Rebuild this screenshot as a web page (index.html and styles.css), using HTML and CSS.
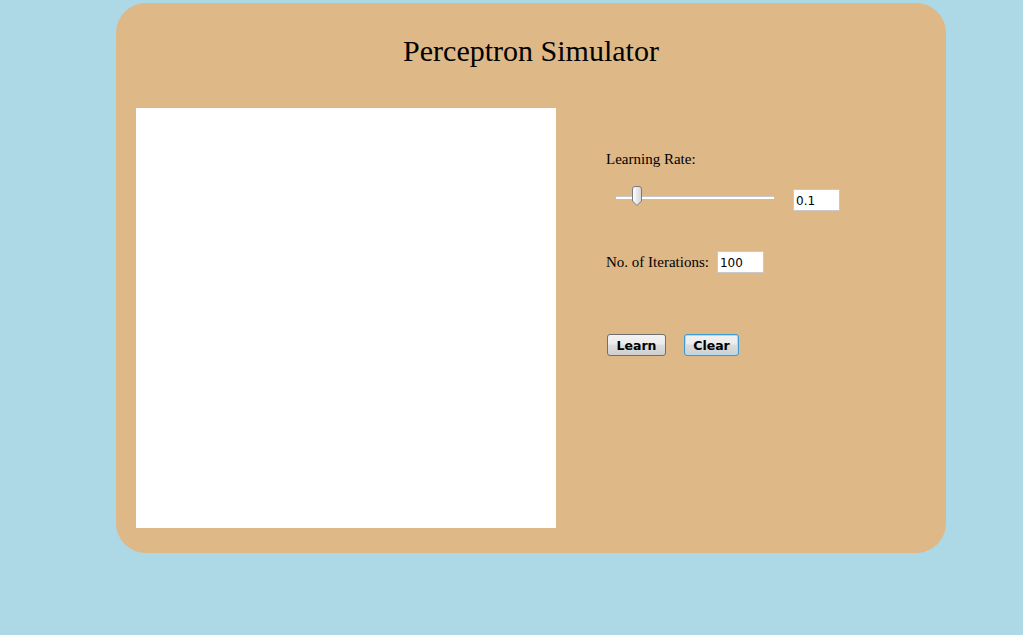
FILE: index.html
```html
<!DOCTYPE html>
<html>
<head>
<meta charset="utf-8">
<title>Perceptron Simulator</title>
<link rel="stylesheet" href="styles.css">
</head>
<body>
<div class="frame">
  <h1 class="title">Perceptron Simulator</h1>
  <div class="main">
    <div class="canvas"></div>
    <div class="panel">
      <div class="label">Learning Rate:</div>
      <div class="slider-row">
        <div class="slider">
          <div class="track"></div>
          <svg class="thumb" width="12" height="20" viewBox="0 0 12 20">
            <defs>
              <linearGradient id="tg" x1="0" y1="0" x2="1" y2="0">
                <stop offset="0" stop-color="#ffffff"/>
                <stop offset="1" stop-color="#d4d4d4"/>
              </linearGradient>
            </defs>
            <path d="M1.5 3 Q1.5 0.5 4 0.5 L8 0.5 Q10.5 0.5 10.5 3 L10.5 15 L6 19.5 L1.5 15 Z" fill="url(#tg)" stroke="#7a7a7a" stroke-width="1"/>
          </svg>
        </div>
        <input class="field" type="text" value="0.1">
      </div>
      <div class="iter-row">
        <span class="label">No. of Iterations:</span>
        <input class="field" type="text" value="100">
      </div>
      <div class="buttons">
        <button class="btn learn">Learn</button>
        <button class="btn clear">Clear</button>
      </div>
    </div>
  </div>
</div>
</body>
</html>
```

FILE: styles.css
```css
html, body {
  margin: 0;
  padding: 0;
  background: #add8e6;
  height: 100%;
}
body {
  font-family: "Liberation Serif", "Times New Roman", serif;
  overflow: hidden;
}
.frame {
  margin: 3px 0 0 116px;
  width: 830px;
  height: 550px;
  background: #deb887;
  border-radius: 30px;
  box-sizing: border-box;
  padding: 0 20px;
}
.title {
  margin: 0;
  height: 105px;
  box-sizing: border-box;
  padding-top: 32px;
  font-size: 30px;
  line-height: 32px;
  font-weight: normal;
  text-align: center;
  color: #000;
}
.main {
  display: flex;
}
.canvas {
  width: 420px;
  height: 420px;
  background: #fff;
  flex: none;
}
.panel {
  margin-left: 50px;
  padding-top: 43px;
  display: flex;
  flex-direction: column;
}
.label {
  font-size: 15px;
  line-height: 17px;
  color: #000;
}
.slider-row {
  display: flex;
  align-items: center;
  margin-top: 21px;
  height: 22px;
}
.slider {
  position: relative;
  width: 158px;
  height: 22px;
  margin-left: 10px;
}
.track {
  position: absolute;
  left: 0;
  right: 0;
  top: 7px;
  height: 1px;
  background: #c8c8c8;
  border-bottom: 2px solid #fff;
}
.thumb {
  position: absolute;
  left: 15px;
  top: -3px;
}
.field {
  width: 47px;
  height: 22px;
  box-sizing: border-box;
  border: 1px solid #c9c9c9;
  background: #fff;
  font-family: "DejaVu Sans", "Liberation Sans", sans-serif;
  font-size: 12px;
  padding: 2px 2px 0;
  margin: 0;
  color: #000;
  outline: none;
}
.slider-row .field {
  margin-left: 19px;
}
.iter-row {
  display: flex;
  align-items: center;
  margin-top: 40px;
  height: 22px;
}
.iter-row .field {
  margin-left: 8px;
}
.buttons {
  display: flex;
  margin-top: 61px;
}
.btn {
  height: 22px;
  box-sizing: border-box;
  font-family: "DejaVu Sans", "Liberation Sans", sans-serif;
  font-weight: bold;
  font-size: 12.5px;
  color: #000;
  background: linear-gradient(#f2f2f2 0%, #ebebeb 45%, #dddddd 50%, #cfcfcf 100%);
  border: 1px solid #707070;
  border-radius: 3px;
  padding: 1px 0 0;
  margin: 0;
}
.learn {
  width: 59px;
  margin-left: 1px;
}
.clear {
  width: 55px;
  margin-left: 18px;
  border-color: #3c9bd6;
  box-shadow: inset 0 0 0 1px #a8dcf7;
}
```
